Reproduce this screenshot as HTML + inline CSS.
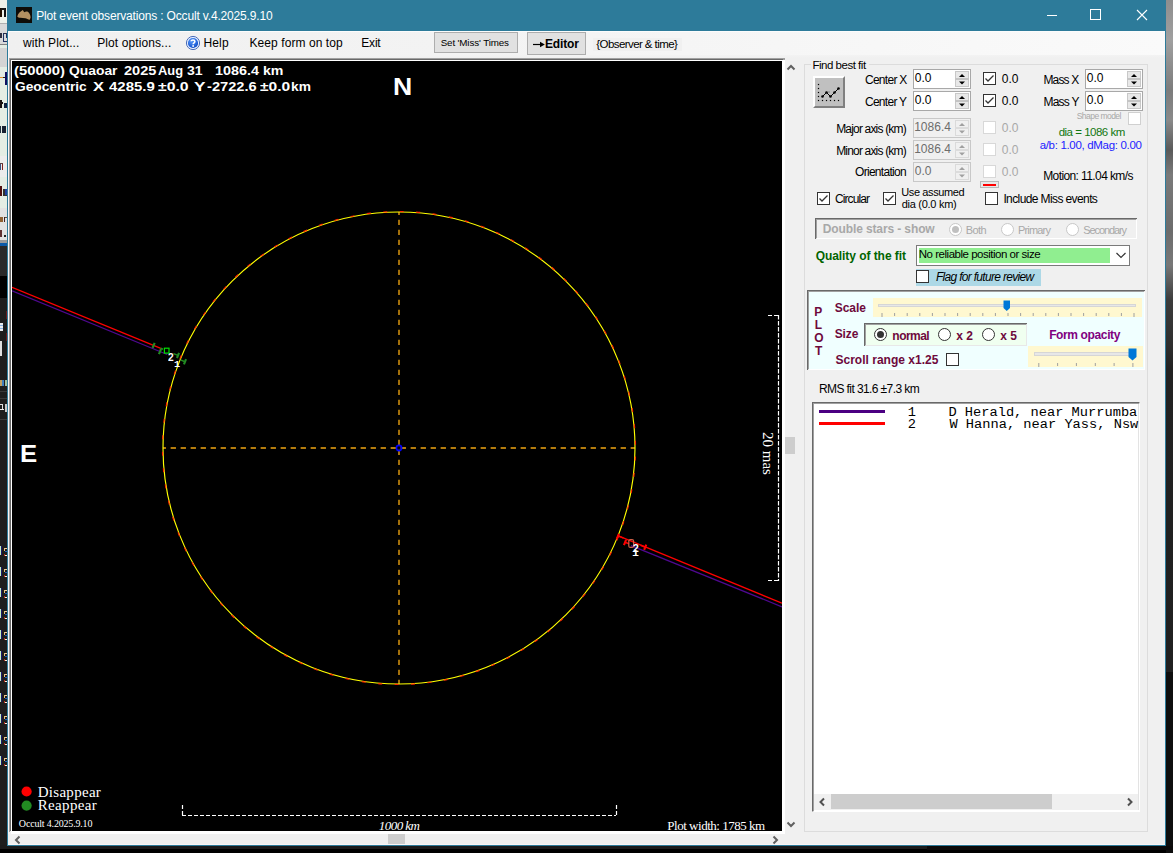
<!DOCTYPE html>
<html><head><meta charset="utf-8"><title>Plot event observations</title>
<style>
html,body{margin:0;padding:0;width:1173px;height:853px;overflow:hidden;background:#1c1c1c;position:relative}
.t{position:absolute;line-height:1;white-space:pre}
</style></head><body>
<div style="position:absolute;left:0px;top:0px;width:1173px;height:853px;background:#1c1c1c"></div><div style="position:absolute;left:0px;top:849px;width:1173px;height:4px;background:#000"></div><div style="position:absolute;left:1166px;top:0px;width:7px;height:672px;background:linear-gradient(180deg,#8e8e8e 0px,#a0a0a0 40px,#7c7c7c 90px,#8a8a8a 120px,#5a5a5a 150px,#7a7a7a 175px,#6c6c6c 230px,#787878 265px,#3c3c3c 300px,#2e2e2e 345px,#222 370px,#202020 672px)"></div><div style="position:absolute;left:1166px;top:672px;width:7px;height:181px;background:#0e0e0e"></div><div style="position:absolute;left:927px;top:846px;width:246px;height:4px;background:#0c0a0a"></div><div style="position:absolute;left:0px;top:0px;width:7px;height:23px;background:#eef2ea"></div><div style="position:absolute;left:0px;top:23px;width:7px;height:1px;background:#b0b0b0"></div><div style="position:absolute;left:0px;top:24px;width:7px;height:20px;background:#d9d9d9"></div><div style="position:absolute;left:0px;top:44px;width:7px;height:1px;background:#808080"></div><div style="position:absolute;left:0px;top:45px;width:7px;height:3px;background:#e4ede4"></div><div style="position:absolute;left:0px;top:48px;width:7px;height:19px;background:#d4d4d4"></div><div style="position:absolute;left:0px;top:67px;width:7px;height:89px;background:#e4ede4"></div><div style="position:absolute;left:0px;top:156px;width:7px;height:21px;background:#ececec"></div><div style="position:absolute;left:0px;top:177px;width:7px;height:31px;background:#e4ede4"></div><div style="position:absolute;left:0px;top:208px;width:7px;height:32px;background:#e2e2e2"></div><div style="position:absolute;left:0px;top:240px;width:7px;height:3px;background:#9a9a9a"></div><div style="position:absolute;left:0px;top:243px;width:7px;height:3px;background:#0c5aa8"></div><div style="position:absolute;left:0px;top:246px;width:7px;height:30px;background:#2a2a2a"></div><div style="position:absolute;left:0px;top:276px;width:7px;height:22px;background:#000"></div><div style="position:absolute;left:0px;top:298px;width:7px;height:547px;background:#1e1e1e"></div><div style="position:absolute;left:7px;top:0px;width:1159px;height:846px;background:#2d7b9a"></div><div style="position:absolute;left:8px;top:31px;width:1157px;height:814px;background:#f0f0f0"></div><div style="position:absolute;left:8px;top:31px;width:1157px;height:1px;background:#fcfcfc"></div><div style="position:absolute;left:8px;top:32px;width:1157px;height:23px;background:linear-gradient(90deg,#f0f0f0 0%,#f4f4f4 50%,#fafafa 100%)"></div><div style="position:absolute;left:8px;top:55px;width:1157px;height:3px;background:linear-gradient(180deg,#f3f3f3,#f0f0f0)"></div><div style="position:absolute;left:8px;top:844px;width:1157px;height:1px;background:#fbf6f6"></div><div style="position:absolute;left:8px;top:31px;width:1px;height:814px;background:#fbf6f6"></div><svg style="position:absolute;left:16px;top:7px" width="16" height="16" viewBox="0 0 16 16"><rect width="16" height="16" fill="#0e0c08"/><path d="M1.3 9.4 C2 6.5 4.5 4.5 6.8 3.1 L8.2 5.2 C9.2 4.8 10.5 4.2 11.8 4.8 C13.5 6 14.6 8.5 14.6 10.4 L13.8 12.7 C12 12.5 10.5 11.2 9.4 11.2 C7.5 11 6 10.8 4.5 10.7 C3 10.6 1.8 10.4 1.3 9.4Z" fill="#b39062"/></svg><div style="position:absolute;left:1047px;top:15px;width:10px;height:1px;background:#fff"></div><div style="position:absolute;left:1090px;top:9px;width:9px;height:9px;border:1px solid #fff"></div><svg style="position:absolute;left:1136px;top:9px" width="12" height="12" viewBox="0 0 12 12"><path d="M1 1 L11 11 M11 1 L1 11" stroke="#fff" stroke-width="1.1"/></svg><svg style="position:absolute;left:185px;top:35px" width="16" height="16" viewBox="0 0 16 16"><defs><radialGradient id="hg" cx="0.4" cy="0.3" r="0.8"><stop offset="0" stop-color="#5a9af8"/><stop offset="0.7" stop-color="#1f5fd8"/><stop offset="1" stop-color="#0a3aa8"/></radialGradient></defs><circle cx="8" cy="8" r="6.6" fill="#e4eeff" stroke="#4a6cb8" stroke-width="1"/><circle cx="8" cy="8" r="5.1" fill="url(#hg)"/><path d="M6.1 6.3 C6.1 4.6 9.9 4.5 9.9 6.5 C9.9 7.8 8.1 7.9 8.1 9.3" fill="none" stroke="#fff" stroke-width="1.5"/><rect x="7.3" y="10.2" width="1.7" height="1.6" fill="#fff"/></svg><div style="position:absolute;left:434px;top:32px;width:82px;height:19px;background:#e1e1e1;border:1px solid #adadad"></div><div style="position:absolute;left:527px;top:32px;width:57px;height:21px;background:#e1e1e1;border:1px solid #adadad"></div><svg style="position:absolute;left:532px;top:40px" width="14" height="9" viewBox="0 0 14 9"><path d="M1 4.5 H10" stroke="#000" stroke-width="1.2"/><path d="M8 1.8 L12.8 4.5 L8 7.2Z" fill="#000"/></svg><div style="position:absolute;left:593px;top:38px;width:89px;height:13px;background:#f0f0f0"></div><div style="position:absolute;left:9px;top:58px;width:776px;height:2px;background:#a0a0a0"></div><div style="position:absolute;left:9px;top:59px;width:774px;height:1px;background:#696969"></div><div style="position:absolute;left:9px;top:58px;width:1px;height:774px;background:#a0a0a0"></div><div style="position:absolute;left:10px;top:59px;width:1px;height:772px;background:#696969"></div><div style="position:absolute;left:11px;top:60px;width:774px;height:774px;background:#fff"></div><div style="position:absolute;left:12px;top:61px;width:770px;height:770px;background:#000"></div><div style="position:absolute;left:785px;top:58px;width:17px;height:776px;background:#f0f0f0"></div><div style="position:absolute;left:785px;top:437px;width:10px;height:17px;background:#cdcdcd"></div><svg style="position:absolute;left:786px;top:63px" width="10" height="9" viewBox="0 0 10 9"><path d="M1.5 6.5 L5 3 L8.5 6.5" fill="none" stroke="#606060" stroke-width="2"/></svg><svg style="position:absolute;left:786px;top:820px" width="10" height="9" viewBox="0 0 10 9"><path d="M1.5 2.5 L5 6 L8.5 2.5" fill="none" stroke="#606060" stroke-width="2"/></svg><div style="position:absolute;left:8px;top:834px;width:777px;height:10px;background:#f0f0f0"></div><div style="position:absolute;left:388px;top:834px;width:17px;height:10px;background:#cdcdcd"></div><svg style="position:absolute;left:13px;top:835px" width="9" height="10" viewBox="0 0 9 10"><path d="M6.5 1.5 L3 5 L6.5 8.5" fill="none" stroke="#606060" stroke-width="2"/></svg><svg style="position:absolute;left:771px;top:835px" width="9" height="10" viewBox="0 0 9 10"><path d="M2.5 1.5 L6 5 L2.5 8.5" fill="none" stroke="#606060" stroke-width="2"/></svg><div style="position:absolute;left:804px;top:64px;width:1px;height:767px;background:#dcdcdc"></div><div style="position:absolute;left:1147px;top:64px;width:1px;height:767px;background:#dcdcdc"></div><div style="position:absolute;left:804px;top:831px;width:344px;height:1px;background:#dcdcdc"></div><div style="position:absolute;left:804px;top:64px;width:7px;height:1px;background:#dcdcdc"></div><div style="position:absolute;left:869px;top:64px;width:279px;height:1px;background:#dcdcdc"></div><div style="position:absolute;left:813px;top:76px;width:32px;height:32px;box-sizing:border-box;background:#c0c0c0;border-top:2px solid #fff;border-left:2px solid #fff;border-right:2px solid #808080;border-bottom:2px solid #808080;outline:1px solid #a0a0a0;outline-offset:-33px"></div><svg style="position:absolute;left:813px;top:76px" width="32" height="32" viewBox="0 0 32 32"><rect x="4.9" y="7.9" width="1.2" height="1.2" fill="#000"/><rect x="4.9" y="11.9" width="1.2" height="1.2" fill="#000"/><rect x="4.9" y="15.9" width="1.2" height="1.2" fill="#000"/><rect x="4.9" y="19.9" width="1.2" height="1.2" fill="#000"/><rect x="4.9" y="23.9" width="1.2" height="1.2" fill="#000"/><rect x="8.9" y="23.9" width="1.2" height="1.2" fill="#000"/><rect x="12.9" y="23.9" width="1.2" height="1.2" fill="#000"/><rect x="16.9" y="23.9" width="1.2" height="1.2" fill="#000"/><rect x="20.9" y="23.9" width="1.2" height="1.2" fill="#000"/><rect x="24.9" y="23.9" width="1.2" height="1.2" fill="#000"/><path d="M9.5 20.5 L13.5 16.5 L17.5 20.5 L21.5 16.5 L25.5 12.5" fill="none" stroke="#000" stroke-width="1"/><circle cx="9.5" cy="20.5" r="1.3" fill="#000"/><circle cx="13.5" cy="16.5" r="1.3" fill="#000"/><circle cx="17.5" cy="20.5" r="1.3" fill="#000"/><circle cx="21.5" cy="16.5" r="1.3" fill="#000"/><circle cx="25.5" cy="12.5" r="1.3" fill="#000"/></svg><div style="position:absolute;left:913px;top:69px;width:58px;height:20px;box-sizing:border-box;background:#fff;border:1px solid #a8a8a8"></div><div style="position:absolute;left:955px;top:71px;width:14px;height:16px;background:#e8e8e8;box-sizing:border-box;border:1px solid #c8c8c8"></div><div style="position:absolute;left:955px;top:78px;width:14px;height:2px;background:#c4c4c4"></div><svg style="position:absolute;left:955px;top:71px" width="14" height="16" viewBox="0 0 14 16"><path d="M4 6 L7 3 L10 6Z" fill="#000"/><path d="M4 10.5 L7 13.5 L10 10.5Z" fill="#000"/></svg><div style="position:absolute;left:913px;top:91px;width:58px;height:20px;box-sizing:border-box;background:#fff;border:1px solid #a8a8a8"></div><div style="position:absolute;left:955px;top:93px;width:14px;height:16px;background:#e8e8e8;box-sizing:border-box;border:1px solid #c8c8c8"></div><div style="position:absolute;left:955px;top:100px;width:14px;height:2px;background:#c4c4c4"></div><svg style="position:absolute;left:955px;top:93px" width="14" height="16" viewBox="0 0 14 16"><path d="M4 6 L7 3 L10 6Z" fill="#000"/><path d="M4 10.5 L7 13.5 L10 10.5Z" fill="#000"/></svg><div style="position:absolute;left:913px;top:118px;width:58px;height:20px;box-sizing:border-box;background:#f0f0f0;border:1px solid #c8c8c8"></div><div style="position:absolute;left:955px;top:120px;width:14px;height:16px;background:#f0f0f0;box-sizing:border-box;border:1px solid #dadada"></div><div style="position:absolute;left:955px;top:127px;width:14px;height:2px;background:#dcdcdc"></div><svg style="position:absolute;left:955px;top:120px" width="14" height="16" viewBox="0 0 14 16"><path d="M4 6 L7 3 L10 6Z" fill="#a0a0a0"/><path d="M4 10.5 L7 13.5 L10 10.5Z" fill="#a0a0a0"/></svg><div style="position:absolute;left:913px;top:140px;width:58px;height:20px;box-sizing:border-box;background:#f0f0f0;border:1px solid #c8c8c8"></div><div style="position:absolute;left:955px;top:142px;width:14px;height:16px;background:#f0f0f0;box-sizing:border-box;border:1px solid #dadada"></div><div style="position:absolute;left:955px;top:149px;width:14px;height:2px;background:#dcdcdc"></div><svg style="position:absolute;left:955px;top:142px" width="14" height="16" viewBox="0 0 14 16"><path d="M4 6 L7 3 L10 6Z" fill="#a0a0a0"/><path d="M4 10.5 L7 13.5 L10 10.5Z" fill="#a0a0a0"/></svg><div style="position:absolute;left:913px;top:162px;width:58px;height:20px;box-sizing:border-box;background:#f0f0f0;border:1px solid #c8c8c8"></div><div style="position:absolute;left:955px;top:164px;width:14px;height:16px;background:#f0f0f0;box-sizing:border-box;border:1px solid #dadada"></div><div style="position:absolute;left:955px;top:171px;width:14px;height:2px;background:#dcdcdc"></div><svg style="position:absolute;left:955px;top:164px" width="14" height="16" viewBox="0 0 14 16"><path d="M4 6 L7 3 L10 6Z" fill="#a0a0a0"/><path d="M4 10.5 L7 13.5 L10 10.5Z" fill="#a0a0a0"/></svg><div style="position:absolute;left:1085px;top:69px;width:58px;height:20px;box-sizing:border-box;background:#fff;border:1px solid #a8a8a8"></div><div style="position:absolute;left:1127px;top:71px;width:14px;height:16px;background:#e8e8e8;box-sizing:border-box;border:1px solid #c8c8c8"></div><div style="position:absolute;left:1127px;top:78px;width:14px;height:2px;background:#c4c4c4"></div><svg style="position:absolute;left:1127px;top:71px" width="14" height="16" viewBox="0 0 14 16"><path d="M4 6 L7 3 L10 6Z" fill="#000"/><path d="M4 10.5 L7 13.5 L10 10.5Z" fill="#000"/></svg><div style="position:absolute;left:1085px;top:91px;width:58px;height:20px;box-sizing:border-box;background:#fff;border:1px solid #a8a8a8"></div><div style="position:absolute;left:1127px;top:93px;width:14px;height:16px;background:#e8e8e8;box-sizing:border-box;border:1px solid #c8c8c8"></div><div style="position:absolute;left:1127px;top:100px;width:14px;height:2px;background:#c4c4c4"></div><svg style="position:absolute;left:1127px;top:93px" width="14" height="16" viewBox="0 0 14 16"><path d="M4 6 L7 3 L10 6Z" fill="#000"/><path d="M4 10.5 L7 13.5 L10 10.5Z" fill="#000"/></svg><div style="position:absolute;left:983px;top:72px;width:13px;height:13px;box-sizing:border-box;background:#fff;border:1px solid #333"></div><svg style="position:absolute;left:983px;top:72px" width="13" height="13" viewBox="0 0 13 13"><path d="M2.5 6.5 L5 9 L10.5 3.5" fill="none" stroke="#333" stroke-width="1.3"/></svg><div style="position:absolute;left:983px;top:94px;width:13px;height:13px;box-sizing:border-box;background:#fff;border:1px solid #333"></div><svg style="position:absolute;left:983px;top:94px" width="13" height="13" viewBox="0 0 13 13"><path d="M2.5 6.5 L5 9 L10.5 3.5" fill="none" stroke="#333" stroke-width="1.3"/></svg><div style="position:absolute;left:983px;top:121px;width:13px;height:13px;box-sizing:border-box;background:#fff;border:1px solid #d8d8d8"></div><div style="position:absolute;left:983px;top:143px;width:13px;height:13px;box-sizing:border-box;background:#fff;border:1px solid #d8d8d8"></div><div style="position:absolute;left:983px;top:165px;width:13px;height:13px;box-sizing:border-box;background:#fff;border:1px solid #d8d8d8"></div><div style="position:absolute;left:1128px;top:112px;width:13px;height:13px;box-sizing:border-box;background:#fff;border:1px solid #d0d0d0"></div><div style="position:absolute;left:980px;top:181px;width:19px;height:7px;box-sizing:border-box;background:#e8e8e8;border:1px solid #b8b8b8"></div><div style="position:absolute;left:983px;top:184px;width:13px;height:2px;background:#ff0000"></div><div style="position:absolute;left:817px;top:192px;width:13px;height:13px;box-sizing:border-box;background:#fff;border:1px solid #333"></div><svg style="position:absolute;left:817px;top:192px" width="13" height="13" viewBox="0 0 13 13"><path d="M2.5 6.5 L5 9 L10.5 3.5" fill="none" stroke="#333" stroke-width="1.3"/></svg><div style="position:absolute;left:883px;top:192px;width:13px;height:13px;box-sizing:border-box;background:#fff;border:1px solid #333"></div><svg style="position:absolute;left:883px;top:192px" width="13" height="13" viewBox="0 0 13 13"><path d="M2.5 6.5 L5 9 L10.5 3.5" fill="none" stroke="#333" stroke-width="1.3"/></svg><div style="position:absolute;left:985px;top:192px;width:13px;height:13px;box-sizing:border-box;background:#fff;border:1px solid #333"></div><div style="position:absolute;left:815px;top:218px;width:322px;height:21px;box-sizing:border-box;background:#f0f0f0;border-top:2px solid #a0a0a0;border-left:2px solid #a0a0a0;border-right:1px solid #fff;border-bottom:1px solid #fff"></div><div style="position:absolute;left:815px;top:218px;width:322px;height:1px;background:#696969"></div><div style="position:absolute;left:815px;top:218px;width:1px;height:21px;background:#696969"></div><div style="position:absolute;left:949px;top:223px;width:13px;height:13px;box-sizing:border-box;border-radius:50%;background:#fff;border:1px solid #c8c8c8"></div><div style="position:absolute;left:952px;top:226px;width:7px;height:7px;border-radius:50%;background:#c0c0c0"></div><div style="position:absolute;left:1001px;top:223px;width:13px;height:13px;box-sizing:border-box;border-radius:50%;background:#fff;border:1px solid #c8c8c8"></div><div style="position:absolute;left:1066px;top:223px;width:13px;height:13px;box-sizing:border-box;border-radius:50%;background:#fff;border:1px solid #c8c8c8"></div><div style="position:absolute;left:916px;top:245px;width:214px;height:21px;box-sizing:border-box;background:#fff;border:1px solid #7a7a7a"></div><div style="position:absolute;left:919px;top:248px;width:191px;height:15px;background:#90ee90"></div><svg style="position:absolute;left:1114px;top:250px" width="14" height="10" viewBox="0 0 14 10"><path d="M2.5 3 L7 7.5 L11.5 3" fill="none" stroke="#333" stroke-width="1.2"/></svg><div style="position:absolute;left:916px;top:269px;width:125px;height:17px;background:#add8e6"></div><div style="position:absolute;left:916px;top:270px;width:13px;height:13px;box-sizing:border-box;background:#fff;border:1px solid #333"></div><div style="position:absolute;left:807px;top:290px;width:338px;height:80px;box-sizing:border-box;background:#f0ffff;border-top:2px solid #a0a0a0;border-left:2px solid #a0a0a0;border-right:1px solid #fff;border-bottom:1px solid #fff"></div><div style="position:absolute;left:807px;top:290px;width:338px;height:1px;background:#696969"></div><div style="position:absolute;left:807px;top:290px;width:1px;height:80px;background:#696969"></div><div style="position:absolute;left:946px;top:353px;width:13px;height:13px;box-sizing:border-box;background:#fff;border:1px solid #333"></div><div style="position:absolute;left:873px;top:298px;width:269px;height:19px;background:#fff8d0"></div><div style="position:absolute;left:878px;top:304px;width:258px;height:3px;box-sizing:border-box;background:#e7e7e7;border:1px solid #d6d6d6"></div><svg style="position:absolute;left:873px;top:298px" width="269" height="19"><rect x="8.5" y="15" width="1" height="4" fill="#a0a0a0"/><rect x="21.1" y="15" width="1" height="3" fill="#a0a0a0"/><rect x="33.7" y="15" width="1" height="3" fill="#a0a0a0"/><rect x="46.3" y="15" width="1" height="3" fill="#a0a0a0"/><rect x="58.9" y="15" width="1" height="3" fill="#a0a0a0"/><rect x="71.5" y="15" width="1" height="3" fill="#a0a0a0"/><rect x="84.1" y="15" width="1" height="3" fill="#a0a0a0"/><rect x="96.7" y="15" width="1" height="3" fill="#a0a0a0"/><rect x="109.3" y="15" width="1" height="3" fill="#a0a0a0"/><rect x="121.9" y="15" width="1" height="3" fill="#a0a0a0"/><rect x="134.5" y="15" width="1" height="3" fill="#a0a0a0"/><rect x="147.1" y="15" width="1" height="3" fill="#a0a0a0"/><rect x="159.7" y="15" width="1" height="3" fill="#a0a0a0"/><rect x="172.3" y="15" width="1" height="3" fill="#a0a0a0"/><rect x="184.9" y="15" width="1" height="3" fill="#a0a0a0"/><rect x="197.5" y="15" width="1" height="3" fill="#a0a0a0"/><rect x="210.1" y="15" width="1" height="3" fill="#a0a0a0"/><rect x="222.7" y="15" width="1" height="3" fill="#a0a0a0"/><rect x="235.3" y="15" width="1" height="3" fill="#a0a0a0"/><rect x="247.9" y="15" width="1" height="3" fill="#a0a0a0"/><rect x="260.5" y="15" width="1" height="4" fill="#a0a0a0"/></svg><svg style="position:absolute;left:1003px;top:300px" width="8" height="12" viewBox="0 0 8 12"><path d="M0.5 0.5 H7 V8 L3.75 11 L0.5 8Z" fill="#0078d7"/></svg><div style="position:absolute;left:864px;top:323px;width:163px;height:23px;box-sizing:border-box;background:#f0fff0;border-top:2px solid #a0a0a0;border-left:2px solid #a0a0a0;border-right:1px solid #e8e8e8;border-bottom:1px solid #e8e8e8"></div><div style="position:absolute;left:864px;top:323px;width:163px;height:1px;background:#696969"></div><div style="position:absolute;left:864px;top:323px;width:1px;height:23px;background:#696969"></div><div style="position:absolute;left:874px;top:328px;width:13px;height:13px;box-sizing:border-box;border-radius:50%;background:#fff;border:1px solid #333"></div><div style="position:absolute;left:877px;top:331px;width:7px;height:7px;border-radius:50%;background:#333"></div><div style="position:absolute;left:938px;top:328px;width:13px;height:13px;box-sizing:border-box;border-radius:50%;background:#fff;border:1px solid #333"></div><div style="position:absolute;left:982px;top:328px;width:13px;height:13px;box-sizing:border-box;border-radius:50%;background:#fff;border:1px solid #333"></div><div style="position:absolute;left:1028px;top:346px;width:115px;height:21px;background:#fff8d0"></div><div style="position:absolute;left:1034px;top:352px;width:102px;height:4px;box-sizing:border-box;background:#e7e7e7;border:1px solid #d6d6d6"></div><svg style="position:absolute;left:1028px;top:346px" width="115" height="21"><rect x="10.3" y="17" width="1" height="4" fill="#a0a0a0"/><rect x="29.1" y="17" width="1" height="3" fill="#a0a0a0"/><rect x="47.9" y="17" width="1" height="3" fill="#a0a0a0"/><rect x="66.8" y="17" width="1" height="3" fill="#a0a0a0"/><rect x="85.6" y="17" width="1" height="3" fill="#a0a0a0"/><rect x="104.4" y="17" width="1" height="4" fill="#a0a0a0"/></svg><svg style="position:absolute;left:1128px;top:348px" width="9" height="13" viewBox="0 0 9 13"><path d="M0.5 0.5 H8.5 V9 L4.5 12.5 L0.5 9Z" fill="#0078d7"/></svg><div style="position:absolute;left:812px;top:402px;width:328px;height:410px;box-sizing:border-box;background:#fff;border-top:2px solid #a0a0a0;border-left:2px solid #a0a0a0;border-right:1px solid #fff;border-bottom:1px solid #fff"></div><div style="position:absolute;left:812px;top:402px;width:327px;height:1px;background:#696969"></div><div style="position:absolute;left:812px;top:402px;width:1px;height:409px;background:#696969"></div><div style="position:absolute;left:1138px;top:404px;width:1px;height:406px;background:#e3e3e3"></div><div style="position:absolute;left:819px;top:410px;width:66px;height:3px;background:#4b0082"></div><div style="position:absolute;left:819px;top:422px;width:66px;height:3px;background:#ff0000"></div><div style="position:absolute;left:814px;top:794px;width:324px;height:16px;background:#f0f0f0"></div><div style="position:absolute;left:831px;top:794px;width:221px;height:15px;background:#cdcdcd"></div><svg style="position:absolute;left:817px;top:797px" width="10" height="10" viewBox="0 0 10 10"><path d="M7 1.5 L3.5 5 L7 8.5" fill="none" stroke="#505050" stroke-width="2"/></svg><svg style="position:absolute;left:1125px;top:797px" width="10" height="10" viewBox="0 0 10 10"><path d="M3 1.5 L6.5 5 L3 8.5" fill="none" stroke="#505050" stroke-width="2"/></svg><div style="position:absolute;left:0;top:0;width:7px;height:845px;overflow:hidden"><div style="position:absolute;left:0px;top:8px;width:1.5px;height:9px;background:#201000"></div><div style="position:absolute;left:3.5px;top:8px;width:2px;height:9px;background:#101010"></div><div style="position:absolute;left:0.5px;top:8px;width:4px;height:2px;background:#181818"></div><div style="position:absolute;left:0px;top:33px;width:1.5px;height:5px;background:#303040"></div><div style="position:absolute;left:2.5px;top:33px;width:3px;height:1.2px;background:#303040"></div><div style="position:absolute;left:3px;top:33px;width:1.3px;height:9px;background:#203060"></div><div style="position:absolute;left:5.5px;top:33px;width:1.5px;height:5px;background:#203060"></div><div style="position:absolute;left:3px;top:40.5px;width:4px;height:1.2px;background:#203060"></div><div style="position:absolute;left:0px;top:77px;width:3px;height:1px;background:#e09030"></div><div style="position:absolute;left:3px;top:77px;width:2px;height:1px;background:#202020"></div><div style="position:absolute;left:5px;top:72px;width:1.6px;height:13px;background:#101060"></div><div style="position:absolute;left:0px;top:100px;width:2px;height:8px;background:#181010"></div><div style="position:absolute;left:0px;top:102px;width:3px;height:1.5px;background:#181010"></div><div style="position:absolute;left:3.5px;top:103px;width:3.5px;height:5px;background:#102040"></div><div style="position:absolute;left:0px;top:126px;width:1.2px;height:7px;background:#203040"></div><div style="position:absolute;left:2px;top:126px;width:4px;height:7px;background:#182030"></div><div style="position:absolute;left:0px;top:163px;width:1px;height:7px;background:#405080"></div><div style="position:absolute;left:2px;top:163px;width:1.3px;height:7px;background:#802020"></div><div style="position:absolute;left:0px;top:163px;width:3px;height:1.2px;background:#604040"></div><div style="position:absolute;left:0px;top:186px;width:2px;height:10px;background:#501010"></div><div style="position:absolute;left:3px;top:189px;width:1.5px;height:7px;background:#303030"></div><div style="position:absolute;left:5px;top:189px;width:1.5px;height:7px;background:#2040a0"></div><div style="position:absolute;left:3px;top:195px;width:3.5px;height:1.2px;background:#303030"></div><div style="position:absolute;left:0px;top:217px;width:2.5px;height:5px;background:#906030"></div><div style="position:absolute;left:3.5px;top:217px;width:1.5px;height:5px;background:#402020"></div><div style="position:absolute;left:5px;top:217px;width:2px;height:1.2px;background:#605040"></div><div style="position:absolute;left:0px;top:230px;width:2px;height:7px;background:#603030"></div><div style="position:absolute;left:4px;top:235px;width:1.5px;height:2px;background:#202020"></div><div style="position:absolute;left:0px;top:323px;width:3px;height:8px;background:#e8ecf0"></div><div style="position:absolute;left:0px;top:325px;width:3px;height:1px;background:#8ab0e0"></div><div style="position:absolute;left:0px;top:328px;width:3px;height:1px;background:#8ab0e0"></div><div style="position:absolute;left:0px;top:341px;width:2px;height:15px;background:#e0e0e0"></div><div style="position:absolute;left:6px;top:311px;width:1px;height:8px;background:#6a1a1a"></div><div style="position:absolute;left:6px;top:333px;width:1px;height:8px;background:#6a1a1a"></div><div style="position:absolute;left:0px;top:380px;width:1.5px;height:6px;background:#c0a060"></div><div style="position:absolute;left:2px;top:380px;width:1.5px;height:6px;background:#4080c0"></div><div style="position:absolute;left:4.5px;top:380px;width:2px;height:6px;background:#a0c0a0"></div><div style="position:absolute;left:0px;top:391px;width:7px;height:1px;background:#3a3a3a"></div><div style="position:absolute;left:0px;top:398px;width:7px;height:1px;background:#3a3a3a"></div><div style="position:absolute;left:0px;top:419px;width:7px;height:1px;background:#3a3a3a"></div><div style="position:absolute;left:0px;top:404px;width:3px;height:1.2px;background:#e0e0e0"></div><div style="position:absolute;left:2px;top:404px;width:1.2px;height:5px;background:#e0e0e0"></div><div style="position:absolute;left:0px;top:409px;width:3.5px;height:1.2px;background:#f0f0f0"></div><div style="position:absolute;left:5px;top:404px;width:1.5px;height:8px;background:#c8c8c8"></div><div style="position:absolute;left:0px;top:546px;width:1px;height:9px;background:#c8f0c0"></div><div style="position:absolute;left:1px;top:546px;width:1px;height:9px;background:#1a1a70"></div><div style="position:absolute;left:4px;top:548px;width:3px;height:1.2px;background:#f0d0a0"></div><div style="position:absolute;left:4px;top:548px;width:1.2px;height:3px;background:#f0c080"></div><div style="position:absolute;left:4.5px;top:550.5px;width:2.5px;height:1px;background:#2060c0"></div><div style="position:absolute;left:4px;top:554.5px;width:3px;height:1.2px;background:#f8f0e0"></div><div style="position:absolute;left:3.5px;top:554px;width:1px;height:1.5px;background:#c03020"></div><div style="position:absolute;left:0px;top:567px;width:1px;height:9px;background:#c8f0c0"></div><div style="position:absolute;left:1px;top:567px;width:1px;height:9px;background:#1a1a70"></div><div style="position:absolute;left:4px;top:569px;width:3px;height:1.2px;background:#f0d0a0"></div><div style="position:absolute;left:4px;top:569px;width:1.2px;height:3px;background:#f0c080"></div><div style="position:absolute;left:4.5px;top:571.5px;width:2.5px;height:1px;background:#2060c0"></div><div style="position:absolute;left:4px;top:575.5px;width:3px;height:1.2px;background:#f8f0e0"></div><div style="position:absolute;left:3.5px;top:575px;width:1px;height:1.5px;background:#c03020"></div><div style="position:absolute;left:0px;top:588px;width:1px;height:9px;background:#c8f0c0"></div><div style="position:absolute;left:1px;top:588px;width:1px;height:9px;background:#1a1a70"></div><div style="position:absolute;left:4px;top:590px;width:3px;height:1.2px;background:#f0d0a0"></div><div style="position:absolute;left:4px;top:590px;width:1.2px;height:3px;background:#f0c080"></div><div style="position:absolute;left:4.5px;top:592.5px;width:2.5px;height:1px;background:#2060c0"></div><div style="position:absolute;left:4px;top:596.5px;width:3px;height:1.2px;background:#f8f0e0"></div><div style="position:absolute;left:3.5px;top:596px;width:1px;height:1.5px;background:#c03020"></div><div style="position:absolute;left:0px;top:609px;width:1px;height:9px;background:#c8f0c0"></div><div style="position:absolute;left:1px;top:609px;width:1px;height:9px;background:#1a1a70"></div><div style="position:absolute;left:4px;top:611px;width:3px;height:1.2px;background:#f0d0a0"></div><div style="position:absolute;left:4px;top:611px;width:1.2px;height:3px;background:#f0c080"></div><div style="position:absolute;left:4.5px;top:613.5px;width:2.5px;height:1px;background:#2060c0"></div><div style="position:absolute;left:4px;top:617.5px;width:3px;height:1.2px;background:#f8f0e0"></div><div style="position:absolute;left:3.5px;top:617px;width:1px;height:1.5px;background:#c03020"></div><div style="position:absolute;left:0px;top:630px;width:1px;height:9px;background:#c8f0c0"></div><div style="position:absolute;left:1px;top:630px;width:1px;height:9px;background:#1a1a70"></div><div style="position:absolute;left:4px;top:632px;width:3px;height:1.2px;background:#f0d0a0"></div><div style="position:absolute;left:4px;top:632px;width:1.2px;height:3px;background:#f0c080"></div><div style="position:absolute;left:4.5px;top:634.5px;width:2.5px;height:1px;background:#2060c0"></div><div style="position:absolute;left:4px;top:638.5px;width:3px;height:1.2px;background:#f8f0e0"></div><div style="position:absolute;left:3.5px;top:638px;width:1px;height:1.5px;background:#c03020"></div><div style="position:absolute;left:0px;top:651px;width:1px;height:9px;background:#c8f0c0"></div><div style="position:absolute;left:1px;top:651px;width:1px;height:9px;background:#1a1a70"></div><div style="position:absolute;left:4px;top:653px;width:3px;height:1.2px;background:#f0d0a0"></div><div style="position:absolute;left:4px;top:653px;width:1.2px;height:3px;background:#f0c080"></div><div style="position:absolute;left:4.5px;top:655.5px;width:2.5px;height:1px;background:#2060c0"></div><div style="position:absolute;left:4px;top:659.5px;width:3px;height:1.2px;background:#f8f0e0"></div><div style="position:absolute;left:3.5px;top:659px;width:1px;height:1.5px;background:#c03020"></div><div style="position:absolute;left:0px;top:672px;width:1px;height:9px;background:#c8f0c0"></div><div style="position:absolute;left:1px;top:672px;width:1px;height:9px;background:#1a1a70"></div><div style="position:absolute;left:4px;top:674px;width:3px;height:1.2px;background:#f0d0a0"></div><div style="position:absolute;left:4px;top:674px;width:1.2px;height:3px;background:#f0c080"></div><div style="position:absolute;left:4.5px;top:676.5px;width:2.5px;height:1px;background:#2060c0"></div><div style="position:absolute;left:4px;top:680.5px;width:3px;height:1.2px;background:#f8f0e0"></div><div style="position:absolute;left:3.5px;top:680px;width:1px;height:1.5px;background:#c03020"></div><div style="position:absolute;left:0px;top:693px;width:1px;height:9px;background:#c8f0c0"></div><div style="position:absolute;left:1px;top:693px;width:1px;height:9px;background:#1a1a70"></div><div style="position:absolute;left:4px;top:695px;width:3px;height:1.2px;background:#f0d0a0"></div><div style="position:absolute;left:4px;top:695px;width:1.2px;height:3px;background:#f0c080"></div><div style="position:absolute;left:4.5px;top:697.5px;width:2.5px;height:1px;background:#2060c0"></div><div style="position:absolute;left:4px;top:701.5px;width:3px;height:1.2px;background:#f8f0e0"></div><div style="position:absolute;left:3.5px;top:701px;width:1px;height:1.5px;background:#c03020"></div><div style="position:absolute;left:0px;top:714px;width:1px;height:9px;background:#c8f0c0"></div><div style="position:absolute;left:1px;top:714px;width:1px;height:9px;background:#1a1a70"></div><div style="position:absolute;left:4px;top:716px;width:3px;height:1.2px;background:#f0d0a0"></div><div style="position:absolute;left:4px;top:716px;width:1.2px;height:3px;background:#f0c080"></div><div style="position:absolute;left:4.5px;top:718.5px;width:2.5px;height:1px;background:#2060c0"></div><div style="position:absolute;left:4px;top:722.5px;width:3px;height:1.2px;background:#f8f0e0"></div><div style="position:absolute;left:3.5px;top:722px;width:1px;height:1.5px;background:#c03020"></div><div style="position:absolute;left:0px;top:735px;width:1px;height:9px;background:#c8f0c0"></div><div style="position:absolute;left:1px;top:735px;width:1px;height:9px;background:#1a1a70"></div><div style="position:absolute;left:4px;top:737px;width:3px;height:1.2px;background:#f0d0a0"></div><div style="position:absolute;left:4px;top:737px;width:1.2px;height:3px;background:#f0c080"></div><div style="position:absolute;left:4.5px;top:739.5px;width:2.5px;height:1px;background:#2060c0"></div><div style="position:absolute;left:4px;top:743.5px;width:3px;height:1.2px;background:#f8f0e0"></div><div style="position:absolute;left:3.5px;top:743px;width:1px;height:1.5px;background:#c03020"></div><div style="position:absolute;left:0px;top:756px;width:1px;height:9px;background:#c8f0c0"></div><div style="position:absolute;left:1px;top:756px;width:1px;height:9px;background:#1a1a70"></div><div style="position:absolute;left:4px;top:758px;width:3px;height:1.2px;background:#f0d0a0"></div><div style="position:absolute;left:4px;top:758px;width:1.2px;height:3px;background:#f0c080"></div><div style="position:absolute;left:4.5px;top:760.5px;width:2.5px;height:1px;background:#2060c0"></div><div style="position:absolute;left:4px;top:764.5px;width:3px;height:1.2px;background:#f8f0e0"></div><div style="position:absolute;left:3.5px;top:764px;width:1px;height:1.5px;background:#c03020"></div></div>
<svg style="position:absolute;left:0;top:0" width="1173" height="853" viewBox="0 0 1173 853"><defs><clipPath id="pc"><rect x="12" y="61" width="770" height="770"/></clipPath></defs><g clip-path="url(#pc)"><path d="M163 448 H635" stroke="#b47c0c" stroke-width="1.8" stroke-dasharray="5.3 4.7" stroke-dashoffset="2.35"/><path d="M399 212 V684" stroke="#b47c0c" stroke-width="1.8" stroke-dasharray="5.3 4.7" stroke-dashoffset="2.35"/><circle cx="399" cy="448" r="2.6" fill="none" stroke="#0000ff" stroke-width="1.6"/><circle cx="399" cy="448" r="236" fill="none" stroke="#ffff00" stroke-width="1.15"/><circle cx="399" cy="448" r="236.5" fill="none" stroke="#ff2a00" stroke-width="1.2" stroke-dasharray="4 12.511" stroke-dashoffset="8.011"/><path d="M12 287.3 L160.8 348.3" stroke="#ff0000" stroke-width="1.25"/><path d="M12 290.9 L167.2 354.5" stroke="#4e0890" stroke-width="1.25"/><path d="M617.8 535.7 L782 603.2" stroke="#ff0000" stroke-width="1.25"/><path d="M631 545.6 L782 606.8" stroke="#4e0890" stroke-width="1.25"/><path d="M160.8 348.3 L163 349.2 M173.5 353.6 L178 355.4 M180.5 359.9 L185 361.8" stroke="#228b22" stroke-width="1.5"/><path d="M154.65 342.80 L152.55 348.00 M179.05 352.80 L176.95 358.00 M161.05 349.00 L158.95 354.20 M186.05 359.20 L183.95 364.40" stroke="#228b22" stroke-width="2.1"/><rect x="164.4" y="348.2" width="4.6" height="4.9" fill="none" stroke="#00e000" stroke-width="1.2"/><path d="M617.8 535.7 L623.5 538.1 M625 542.2 L629 543.8 M640.5 545.3 L645.2 547.2" stroke="#ff0000" stroke-width="1.5"/><path d="M618.85 533.90 L616.75 539.10 M626.05 539.90 L623.95 545.10 M646.25 544.70 L644.15 549.90" stroke="#ff0000" stroke-width="2.1"/><rect x="628.8" y="539.6" width="4.8" height="7.8" rx="1.5" fill="none" stroke="#d06048" stroke-width="1.2"/><circle cx="26.6" cy="791.5" r="5.1" fill="#ff0000"/><circle cx="26.6" cy="805.6" r="5.1" fill="#228b22"/><path d="M182 815.5 H616" stroke="#fff" stroke-width="1.2" stroke-dasharray="4 2"/><path d="M182.5 805 V815 M616.5 805 V815" stroke="#fff" stroke-width="1.2" stroke-dasharray="4 2"/><path d="M778.5 315 V581" stroke="#fff" stroke-width="1.2" stroke-dasharray="4.5 1.5"/><path d="M768 315.5 H778 M768 580.5 H778" stroke="#fff" stroke-width="1.2" stroke-dasharray="4 2"/></g></svg>
<div class="t" style="left:36.2px;top:10.2px;font-family:'Liberation Sans';font-size:12px;color:#fff;letter-spacing:-0.166px;">Plot event observations : Occult v.4.2025.9.10</div><div class="t" style="left:23.0px;top:36.8px;font-family:'Liberation Sans';font-size:12px;color:#000;letter-spacing:0.088px;">with Plot...</div><div class="t" style="left:97.2px;top:36.8px;font-family:'Liberation Sans';font-size:12px;color:#000;letter-spacing:0.102px;">Plot options...</div><div class="t" style="left:203.4px;top:36.8px;font-family:'Liberation Sans';font-size:12px;color:#000;letter-spacing:0.189px;">Help</div><div class="t" style="left:249.5px;top:36.8px;font-family:'Liberation Sans';font-size:12px;color:#000;letter-spacing:0.076px;">Keep form on top</div><div class="t" style="left:361.3px;top:36.8px;font-family:'Liberation Sans';font-size:12px;color:#000;letter-spacing:-0.2px;">Exit</div><div class="t" style="left:440.67px;top:38.17px;font-family:'Liberation Sans';font-size:9.8px;color:#000;letter-spacing:-0.124px;">Set &#x27;Miss&#x27; Times</div><div class="t" style="left:544.93px;top:38.1px;font-family:'Liberation Sans';font-size:12px;color:#000;font-weight:bold;letter-spacing:-0.14px;">Editor</div><div class="t" style="left:596.3px;top:39.23px;font-family:'Liberation Sans';font-size:11.5px;color:#000;letter-spacing:-0.579px;">{Observer &amp; time}</div><div class="t" style="left:14.44px;top:63.85px;font-family:'Liberation Sans';font-size:13px;color:#fff;font-weight:bold;transform:scaleX(1.1382);transform-origin:0 0;">(50000)</div><div class="t" style="left:68.89px;top:63.85px;font-family:'Liberation Sans';font-size:13px;color:#fff;font-weight:bold;transform:scaleX(1.0657);transform-origin:0 0;">Quaoar</div><div class="t" style="left:123.93px;top:63.85px;font-family:'Liberation Sans';font-size:13px;color:#fff;font-weight:bold;transform:scaleX(1.1188);transform-origin:0 0;">2025</div><div class="t" style="left:158.37px;top:63.85px;font-family:'Liberation Sans';font-size:13px;color:#fff;font-weight:bold;transform:scaleX(0.9917);transform-origin:0 0;">Aug</div><div class="t" style="left:187.34px;top:63.85px;font-family:'Liberation Sans';font-size:13px;color:#fff;font-weight:bold;transform:scaleX(1.0786);transform-origin:0 0;">31</div><div class="t" style="left:215.26px;top:63.85px;font-family:'Liberation Sans';font-size:13px;color:#fff;font-weight:bold;transform:scaleX(1.1051);transform-origin:0 0;">1086.4</div><div class="t" style="left:263.31px;top:63.85px;font-family:'Liberation Sans';font-size:13px;color:#fff;font-weight:bold;transform:scaleX(1.0882);transform-origin:0 0;">km</div><div class="t" style="left:14.5px;top:79.55px;font-family:'Liberation Sans';font-size:13px;color:#fff;font-weight:bold;transform:scaleX(1.0567);transform-origin:0 0;">Geocentric</div><div class="t" style="left:93.48px;top:79.55px;font-family:'Liberation Sans';font-size:13px;color:#fff;font-weight:bold;transform:scaleX(1.272);transform-origin:0 0;">X</div><div class="t" style="left:109.42px;top:79.55px;font-family:'Liberation Sans';font-size:13px;color:#fff;font-weight:bold;transform:scaleX(1.1513);transform-origin:0 0;">4285.9</div><div class="t" style="left:157.69px;top:79.55px;font-family:'Liberation Sans';font-size:13px;color:#fff;font-weight:bold;transform:scaleX(1.2164);transform-origin:0 0;">±0.0</div><div class="t" style="left:193.86px;top:79.55px;font-family:'Liberation Sans';font-size:13px;color:#fff;font-weight:bold;transform:scaleX(1.325);transform-origin:0 0;">Y</div><div class="t" style="left:207.22px;top:79.55px;font-family:'Liberation Sans';font-size:13px;color:#fff;font-weight:bold;transform:scaleX(1.1262);transform-origin:0 0;">-2722.6</div><div class="t" style="left:260.0px;top:79.55px;font-family:'Liberation Sans';font-size:13px;color:#fff;font-weight:bold;transform:scaleX(1.1959);transform-origin:0 0;">±0.0</div><div class="t" style="left:291.04px;top:79.55px;font-family:'Liberation Sans';font-size:13px;color:#fff;font-weight:bold;transform:scaleX(1.0588);transform-origin:0 0;">km</div><div class="t" style="left:392.55px;top:75.2px;font-family:'Liberation Sans';font-size:24px;color:#fff;font-weight:bold;transform:scaleX(1.1071);transform-origin:0 0;">N</div><div class="t" style="left:19.71px;top:442.1px;font-family:'Liberation Sans';font-size:24px;color:#fff;font-weight:bold;transform:scaleX(1.0725);transform-origin:0 0;">E</div><div class="t" style="left:37.67px;top:784.55px;font-family:'Liberation Serif';font-size:15px;color:#fff;letter-spacing:0.296px;">Disappear</div><div class="t" style="left:37.67px;top:798.45px;font-family:'Liberation Serif';font-size:15px;color:#fff;letter-spacing:0.352px;">Reappear</div><div class="t" style="left:18.87px;top:819.0px;font-family:'Liberation Serif';font-size:10px;color:#fff;letter-spacing:-0.182px;">Occult 4.2025.9.10</div><div class="t" style="left:378.87px;top:818.51px;font-family:'Liberation Serif';font-size:13px;color:#fff;font-style:italic;letter-spacing:-0.578px;">1000 km</div><div class="t" style="left:667.37px;top:818.51px;font-family:'Liberation Serif';font-size:13px;color:#fff;letter-spacing:-0.489px;">Plot width: 1785 km</div><div class="t" style="left:812.4px;top:59.52px;font-family:'Liberation Sans';font-size:11.5px;color:#000;letter-spacing:-0.478px;">Find best fit</div><div class="t" style="left:864.93px;top:74.3px;font-family:'Liberation Sans';font-size:12px;color:#000;letter-spacing:-0.705px;">Center X</div><div class="t" style="left:864.93px;top:96.3px;font-family:'Liberation Sans';font-size:12px;color:#000;letter-spacing:-0.705px;">Center Y</div><div class="t" style="left:914.87px;top:72.3px;font-family:'Liberation Sans';font-size:12px;color:#000;">0.0</div><div class="t" style="left:914.87px;top:94.3px;font-family:'Liberation Sans';font-size:12px;color:#000;">0.0</div><div class="t" style="left:1086.87px;top:72.3px;font-family:'Liberation Sans';font-size:12px;color:#000;">0.0</div><div class="t" style="left:1086.87px;top:94.3px;font-family:'Liberation Sans';font-size:12px;color:#000;">0.0</div><div class="t" style="left:836.2px;top:123.4px;font-family:'Liberation Sans';font-size:12px;color:#000;letter-spacing:-0.824px;">Major axis (km)</div><div class="t" style="left:836.2px;top:145.4px;font-family:'Liberation Sans';font-size:12px;color:#000;letter-spacing:-0.824px;">Minor axis (km)</div><div class="t" style="left:855.03px;top:166.4px;font-family:'Liberation Sans';font-size:12px;color:#000;letter-spacing:-0.703px;">Orientation</div><div class="t" style="left:914.2px;top:121.3px;font-family:'Liberation Sans';font-size:12px;color:#6d6d6d;">1086.4</div><div class="t" style="left:914.2px;top:143.3px;font-family:'Liberation Sans';font-size:12px;color:#6d6d6d;">1086.4</div><div class="t" style="left:914.87px;top:165.3px;font-family:'Liberation Sans';font-size:12px;color:#6d6d6d;">0.0</div><div class="t" style="left:1001.87px;top:73.2px;font-family:'Liberation Sans';font-size:12px;color:#000;">0.0</div><div class="t" style="left:1001.87px;top:95.2px;font-family:'Liberation Sans';font-size:12px;color:#000;">0.0</div><div class="t" style="left:1001.87px;top:122.2px;font-family:'Liberation Sans';font-size:12px;color:#a8a8a8;">0.0</div><div class="t" style="left:1001.87px;top:144.2px;font-family:'Liberation Sans';font-size:12px;color:#a8a8a8;">0.0</div><div class="t" style="left:1001.87px;top:166.2px;font-family:'Liberation Sans';font-size:12px;color:#a8a8a8;">0.0</div><div class="t" style="left:1043.4px;top:74.2px;font-family:'Liberation Sans';font-size:12px;color:#000;letter-spacing:-0.813px;">Mass X</div><div class="t" style="left:1043.4px;top:96.2px;font-family:'Liberation Sans';font-size:12px;color:#000;letter-spacing:-0.747px;">Mass Y</div><div class="t" style="left:1076.67px;top:112.38px;font-family:'Liberation Sans';font-size:8.5px;color:#a8a8a8;letter-spacing:-0.533px;">Shape model</div><div class="t" style="left:1058.67px;top:126.82px;font-family:'Liberation Sans';font-size:11.5px;color:#117711;letter-spacing:-0.497px;">dia = 1086 km</div><div class="t" style="left:1039.67px;top:140.32px;font-family:'Liberation Sans';font-size:11.5px;color:#2222ff;letter-spacing:-0.325px;">a/b: 1.00, dMag: 0.00</div><div class="t" style="left:1043.2px;top:170.1px;font-family:'Liberation Sans';font-size:12px;color:#000;letter-spacing:-0.6px;">Motion: 11.04 km/s</div><div class="t" style="left:834.93px;top:192.9px;font-family:'Liberation Sans';font-size:12px;color:#000;letter-spacing:-0.895px;">Circular</div><div class="t" style="left:901.33px;top:187.05px;font-family:'Liberation Sans';font-size:11px;color:#000;letter-spacing:-0.4px;">Use assumed</div><div class="t" style="left:901.67px;top:199.25px;font-family:'Liberation Sans';font-size:11px;color:#000;letter-spacing:-0.273px;">dia (0.0 km)</div><div class="t" style="left:1003.4px;top:193.3px;font-family:'Liberation Sans';font-size:12px;color:#000;letter-spacing:-0.606px;">Include Miss events</div><div class="t" style="left:822.73px;top:223.1px;font-family:'Liberation Sans';font-size:12px;color:#a8a8a8;font-weight:bold;letter-spacing:-0.113px;">Double stars - show</div><div class="t" style="left:965.8px;top:225.15px;font-family:'Liberation Sans';font-size:11px;color:#a8a8a8;letter-spacing:-0.6px;">Both</div><div class="t" style="left:1018.0px;top:225.15px;font-family:'Liberation Sans';font-size:11px;color:#a8a8a8;letter-spacing:-0.833px;">Primary</div><div class="t" style="left:1083.33px;top:225.15px;font-family:'Liberation Sans';font-size:11px;color:#a8a8a8;letter-spacing:-1.125px;">Secondary</div><div class="t" style="left:815.67px;top:250.0px;font-family:'Liberation Sans';font-size:12px;color:#006400;font-weight:bold;letter-spacing:-0.059px;">Quality of the fit</div><div class="t" style="left:918.8px;top:248.83px;font-family:'Liberation Sans';font-size:11.5px;color:#000;letter-spacing:-0.486px;">No reliable position or size</div><div class="t" style="left:935.97px;top:270.9px;font-family:'Liberation Sans';font-size:12px;color:#000;font-style:italic;letter-spacing:-0.695px;">Flag for future review</div><div class="t" style="left:814.23px;top:306.1px;font-family:'Liberation Sans';font-size:12px;color:#6e0a3c;font-weight:bold;">P</div><div class="t" style="left:814.63px;top:319.1px;font-family:'Liberation Sans';font-size:12px;color:#6e0a3c;font-weight:bold;">L</div><div class="t" style="left:814.17px;top:332.4px;font-family:'Liberation Sans';font-size:12px;color:#6e0a3c;font-weight:bold;">O</div><div class="t" style="left:815.0px;top:345.2px;font-family:'Liberation Sans';font-size:12px;color:#6e0a3c;font-weight:bold;">T</div><div class="t" style="left:834.67px;top:301.8px;font-family:'Liberation Sans';font-size:12px;color:#6e0a3c;font-weight:bold;letter-spacing:-0.017px;">Scale</div><div class="t" style="left:834.67px;top:328.3px;font-family:'Liberation Sans';font-size:12px;color:#6e0a3c;font-weight:bold;letter-spacing:-0.111px;">Size</div><div class="t" style="left:835.47px;top:353.8px;font-family:'Liberation Sans';font-size:12px;color:#6e0a3c;font-weight:bold;letter-spacing:0.012px;">Scroll range x1.25</div><div class="t" style="left:892.33px;top:329.6px;font-family:'Liberation Sans';font-size:12px;color:#6e0a3c;font-weight:bold;letter-spacing:-0.533px;">normal</div><div class="t" style="left:956.17px;top:329.6px;font-family:'Liberation Sans';font-size:12px;color:#6e0a3c;font-weight:bold;">x 2</div><div class="t" style="left:1000.37px;top:329.6px;font-family:'Liberation Sans';font-size:12px;color:#6e0a3c;font-weight:bold;">x 5</div><div class="t" style="left:1049.13px;top:329.1px;font-family:'Liberation Sans';font-size:12px;color:#800080;font-weight:bold;letter-spacing:-0.37px;">Form opacity</div><div class="t" style="left:819.0px;top:383.1px;font-family:'Liberation Sans';font-size:12px;color:#000;letter-spacing:-0.596px;">RMS fit 31.6 ±7.3 km</div><div class="t" style="left:907.7px;top:406.19px;font-family:'Liberation Mono';font-size:13.7px;color:#000;">1</div><div class="t" style="left:907.7px;top:418.19px;font-family:'Liberation Mono';font-size:13.7px;color:#000;">2</div><div class="t" style="left:948.4px;top:406.19px;font-family:'Liberation Mono';font-size:13.7px;color:#000;width:189.5px;overflow:hidden;">D Herald, near Murrumbateman</div><div class="t" style="left:949.4px;top:418.19px;font-family:'Liberation Mono';font-size:13.7px;color:#000;width:189.5px;overflow:hidden;">W Hanna, near Yass, Nsw</div><div class="t" style="left:168.16px;top:352.9px;font-family:'Liberation Sans';font-size:10px;color:#fff;font-weight:bold;transform:scaleX(1.02);transform-origin:0 0;">2</div><div class="t" style="left:174.29px;top:360.28px;font-family:'Liberation Mono';font-size:9.5px;color:#fff;font-weight:bold;transform:scaleX(1.0714);transform-origin:0 0;">1</div><div class="t" style="left:633.15px;top:543.7px;font-family:'Liberation Sans';font-size:10px;color:#fff;font-weight:bold;transform:scaleX(1.04);transform-origin:0 0;">2</div><div class="t" style="left:632.3px;top:549.48px;font-family:'Liberation Mono';font-size:9.5px;color:#fff;font-weight:bold;transform:scaleX(1.2);transform-origin:0 0;">1</div>
<div class="t" style="left:763.5px;top:432px;font-family:&quot;Liberation Serif&quot;;font-size:15px;color:#fff;transform-origin:0 0;transform:translate(11px,0) rotate(90deg)">20 mas</div>
</body></html>
